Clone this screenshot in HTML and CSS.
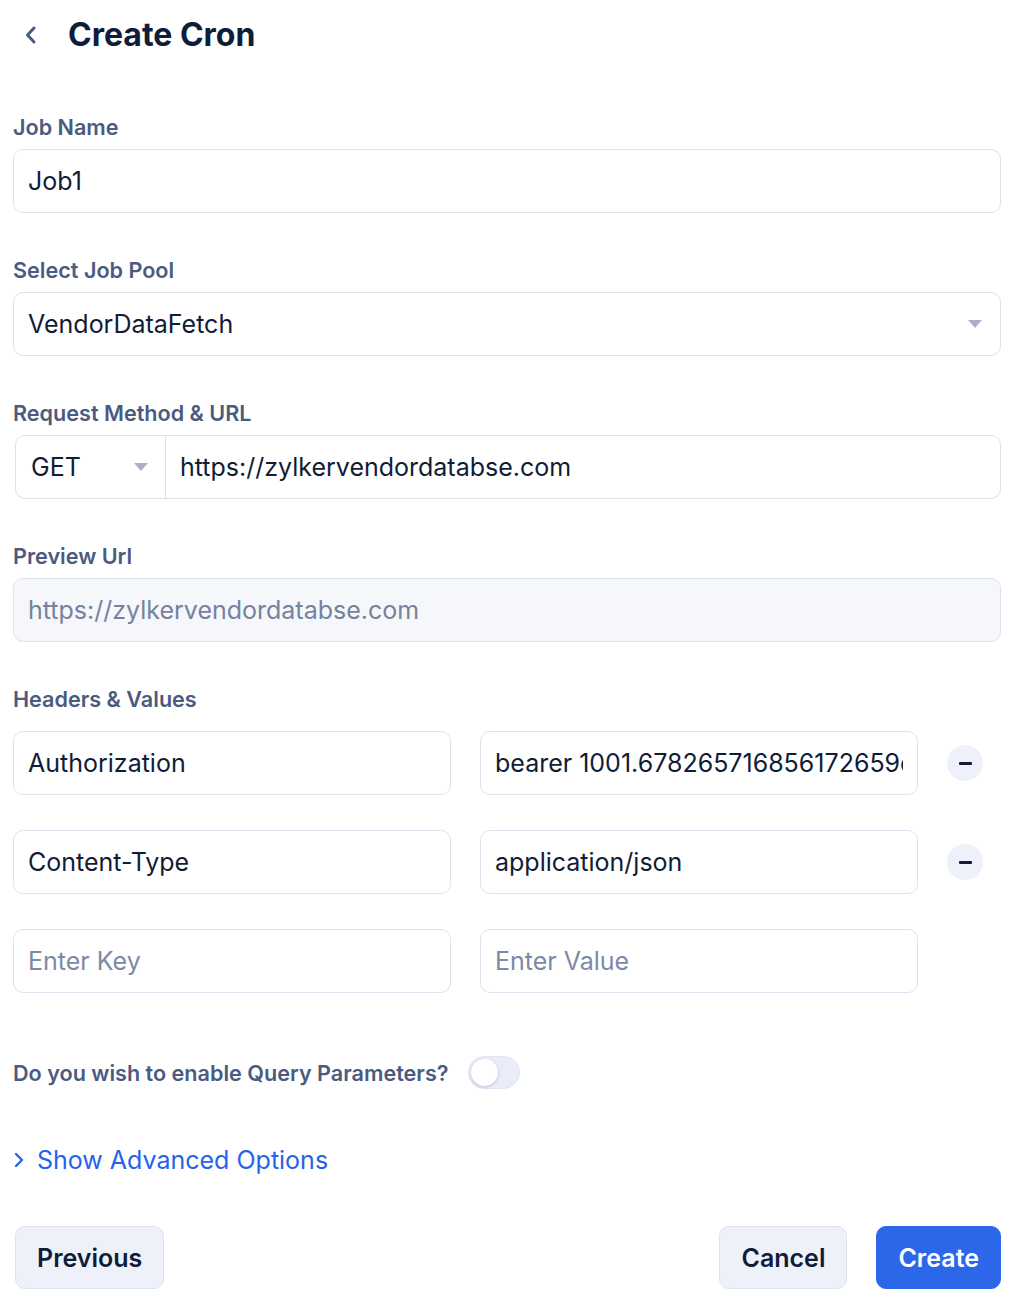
FILE: index.html
```html
<!DOCTYPE html>
<html lang="en">
  <head>
    <meta charset="UTF-8" />
    <meta name="viewport" content="width=device-width, initial-scale=1.0" />
    <title>Create Cron</title>
    <link rel="stylesheet" href="styles.css">
  </head>
  <body>
    <div class="page">
      <div class="header">
        <button class="back-btn" aria-label="Back">
          <svg width="14" height="18" viewBox="0 0 14 18">
            <path d="M10 2 L3.5 9 L10 16" fill="none" stroke="#4b5b80" stroke-width="3" stroke-linecap="round" stroke-linejoin="round" />
          </svg>
        </button>
        <h1>Create Cron</h1>
      </div>

      <div class="form-group">
        <label for="job-name">Job Name</label>
        <input class="field" type="text" id="job-name" value="Job1" />
      </div>

      <div class="form-group">
        <label>Select Job Pool</label>
        <div class="field select">
          <span>VendorDataFetch</span>
          <span class="caret"></span>
        </div>
      </div>

      <div class="form-group">
        <label>Request Method &amp; URL</label>
        <div class="url-row">
          <div class="method">
            <span>GET</span>
            <span class="caret"></span>
          </div>
          <input class="url-input" type="text" value="https://zylkervendordatabse.com" />
        </div>
      </div>

      <div class="form-group">
        <label>Preview Url</label>
        <input class="field preview" type="text" value="https://zylkervendordatabse.com" readonly />
      </div>

      <div class="headers">
        <label class="headers-label">Headers &amp; Values</label>
        <div class="header-row">
          <input class="field" type="text" value="Authorization" />
          <input class="field" type="text" value="bearer 1001.678265716856172659e0f1a2b3c4d5" />
          <button class="remove-btn" aria-label="Remove"><span></span></button>
        </div>
        <div class="header-row">
          <input class="field" type="text" value="Content-Type" />
          <input class="field" type="text" value="application/json" />
          <button class="remove-btn" aria-label="Remove"><span></span></button>
        </div>
        <div class="header-row">
          <input class="field" type="text" placeholder="Enter Key" />
          <input class="field" type="text" placeholder="Enter Value" />
        </div>
      </div>

      <div class="query-row">
        <span>Do you wish to enable Query Parameters?</span>
        <div class="toggle"><div class="knob"></div></div>
      </div>

      <a class="advanced" href="#">
        <svg width="12" height="18" viewBox="0 0 12 18">
          <path d="M3 3 L9 9 L3 15" fill="none" stroke="#2563eb" stroke-width="2.4" stroke-linecap="round" stroke-linejoin="round" />
        </svg>
        Show Advanced Options
      </a>

      <div class="footer">
        <button class="btn btn-light">Previous</button>
        <div class="footer-right">
          <button class="btn btn-light">Cancel</button>
          <button class="btn btn-primary">Create</button>
        </div>
      </div>
    </div>
  </body>
</html>
```

FILE: styles.css
```css
body {
  font-family: Inter, "Noto Sans", sans-serif;
  margin: 0;
  padding: 0;
  background-color: #ffffff;
  color: #111c36;
}
.page {
  width: 988px;
  margin-left: 13px;
}
.header {
  display: flex;
  align-items: center;
  height: 38px;
  padding-top: 16px;
  margin-bottom: 61px;
}
.back-btn {
  background: none;
  border: none;
  padding: 0;
  margin-left: 11px;
  margin-right: 30px;
  display: flex;
  cursor: pointer;
}
h1 {
  margin: 0;
  font-size: 32px;
  font-weight: 700;
  color: #0f1d3a;
  line-height: 38px;
}
.form-group {
  margin-bottom: 45px;
}
label {
  display: block;
  font-size: 21.6px;
  line-height: 24px;
  font-weight: 600;
  color: #4b5b80;
  margin-bottom: 10px;
}
.field {
  box-sizing: border-box;
  width: 100%;
  height: 64px;
  padding: 0 14px;
  border: 1px solid #dde2ee;
  border-radius: 10px;
  font-family: inherit;
  font-size: 25px;
  color: #111c36;
  background: #fff;
  outline: none;
}
.field::placeholder {
  color: #7d89a6;
}
.select {
  display: flex;
  align-items: center;
  justify-content: space-between;
  padding-right: 18px;
}
.caret {
  width: 0;
  height: 0;
  border-left: 7px solid transparent;
  border-right: 7px solid transparent;
  border-top: 8px solid #a9b1c4;
}
.url-row {
  display: flex;
  height: 64px;
  margin-left: 2px;
  border: 1px solid #dde2ee;
  border-radius: 10px;
  box-sizing: border-box;
}
.method {
  box-sizing: border-box;
  width: 150px;
  display: flex;
  align-items: center;
  justify-content: space-between;
  padding: 0 17px 0 15px;
  border-right: 1px solid #dde2ee;
  font-size: 25px;
}
.url-input {
  flex: 1;
  border: none;
  background: transparent;
  font-family: inherit;
  font-size: 25px;
  color: #111c36;
  padding: 0 14px;
  outline: none;
}
.preview {
  background: #f5f7fb;
  color: #76829e;
}
.headers-label {
  margin-bottom: 20px;
}
.header-row {
  display: grid;
  grid-template-columns: 1fr 1fr 36px;
  gap: 29px;
  padding-right: 18px;
  align-items: center;
  margin-bottom: 35px;
}
.header-row:last-child {
  margin-bottom: 0;
}
.remove-btn {
  width: 36px;
  height: 36px;
  border-radius: 50%;
  border: none;
  background: #eef1f9;
  display: flex;
  align-items: center;
  justify-content: center;
  padding: 0;
  cursor: pointer;
}
.remove-btn span {
  width: 13px;
  height: 3px;
  border-radius: 1px;
  background: #111c36;
}
.query-row {
  display: flex;
  align-items: center;
  gap: 19px;
  margin-top: 63px;
  font-size: 21.6px;
  font-weight: 600;
  color: #4b5b80;
}
.toggle {
  box-sizing: border-box;
  width: 52px;
  height: 33px;
  border-radius: 17px;
  background: #e9edfa;
  border: 1px solid #dfe4f2;
  padding: 2px;
}
.knob {
  width: 27px;
  height: 27px;
  border-radius: 50%;
  background: #fff;
  box-shadow: 0 1px 3px rgba(40, 50, 90, 0.25);
}
.advanced {
  display: flex;
  align-items: center;
  gap: 12px;
  margin-top: 56px;
  font-size: 25px;
  line-height: 30px;
  color: #2563eb;
  text-decoration: none;
}
.footer {
  display: flex;
  justify-content: space-between;
  margin-top: 51px;
  padding-left: 2px;
}
.footer-right {
  display: flex;
  gap: 29px;
}
.btn {
  height: 63px;
  padding: 0 21px;
  border-radius: 10px;
  font-family: inherit;
  font-size: 25px;
  font-weight: 600;
  cursor: pointer;
}
.btn-light {
  background: #eef1fa;
  border: 1px solid #dde2ee;
  color: #0f1d3a;
}
.btn-primary {
  background: #2b67e8;
  border: 1px solid #2b67e8;
  color: #fff;
}
```
